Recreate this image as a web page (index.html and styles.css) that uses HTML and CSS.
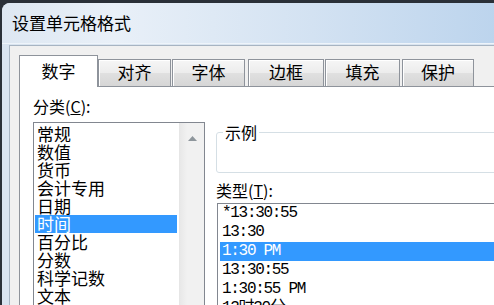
FILE: index.html
```html
<!DOCTYPE html>
<html lang="zh-CN">
<head>
<meta charset="utf-8">
<title>设置单元格格式</title>
<link rel="stylesheet" href="styles.css">
</head>
<body>
<div class="window">
  <div class="titlebar"><span class="title">设置单元格格式</span></div>
  <div class="frame">
    <div class="client">
      <div class="tabs">
        <div class="tab sel t1">数字</div>
        <div class="tab t2">对齐</div>
        <div class="tab t3">字体</div>
        <div class="tab t4">边框</div>
        <div class="tab t5">填充</div>
        <div class="tab t6">保护</div>
      </div>
      <div class="panel">
        <div class="left">
          <div class="label">分类(<u>C</u>):</div>
          <div class="listbox">
            <div class="items">
              <div class="item">常规</div>
              <div class="item">数值</div>
              <div class="item">货币</div>
              <div class="item">会计专用</div>
              <div class="item">日期</div>
              <div class="item active">时间</div>
              <div class="item">百分比</div>
              <div class="item">分数</div>
              <div class="item">科学记数</div>
              <div class="item">文本</div>
            </div>
            <div class="scrollbar">
              <svg class="arrow" width="9" height="5" viewBox="0 0 9 5"><path d="M0 5 L4.5 0 L9 5 Z" fill="#8e969c"/></svg>
            </div>
          </div>
        </div>
        <div class="right">
          <fieldset class="group">
            <legend>示例</legend>
          </fieldset>
          <div class="label type-label">类型(<u>T</u>):</div>
          <div class="typelist">
            <div class="titem">*13:30:55</div>
            <div class="titem">13:30</div>
            <div class="titem active">1:30 PM</div>
            <div class="titem">13:30:55</div>
            <div class="titem">1:30:55 PM</div>
            <div class="titem cjk">13时30分</div>
          </div>
        </div>
      </div>
    </div>
  </div>
</div>
</body>
</html>
```
FILE: styles.css
```css
html, body {
  margin: 0;
  padding: 0;
}
body {
  width: 494px;
  height: 305px;
  overflow: hidden;
  background: #2a3038;
  font-family: "Noto Sans CJK SC", "Liberation Sans", sans-serif;
  color: #000;
}
.window {
  margin: 3px 0 0 2px;
  width: 620px;
  height: 320px;
  background: #d9e4f0;
  border-top-left-radius: 8px;
  overflow: hidden;
}
.titlebar {
  height: 40px;
  display: flex;
  align-items: center;
  padding-left: 10px;
  background: linear-gradient(to right, #dde7f2 0%, #e9f0f8 18%, #d3e2f2 50%, #bcd4ed 80%, #b8d0eb 100%);
  border-bottom: 1px solid #eef4fa;
}
.title {
  font-size: 17px;
  line-height: 20px;
  color: #000;
}
.frame {
  padding: 1px 0 0 7px;
}
.client {
  background: #f0f0f0;
  border-top: 1px solid #a7b4c2;
  border-left: 1px solid #a7b4c2;
  padding: 9px 0 0 9px;
  height: 300px;
}
.tabs {
  display: flex;
  align-items: flex-end;
  height: 32px;
  margin-bottom: -1px;
  position: relative;
  z-index: 1;
}
.tab {
  box-sizing: border-box;
  height: 28px;
  border: 1px solid #8e939b;
  background: linear-gradient(#f6f6f6, #ececec 50%, #e0e0e0 51%, #d6d6d6);
  box-shadow: inset 1px 1px 0 #fff;
  font-size: 17px;
  line-height: 24px;
  text-align: center;
}
.tab.sel {
  height: 32px;
  background: #fff;
  border-bottom: none;
  box-shadow: none;
  line-height: 30px;
}
.t1 { width: 79px; }
.t2 { width: 73px; margin-left: 0; }
.t3 { width: 73px; margin-left: 1px; }
.t4 { width: 76px; margin-left: 3px; }
.t5 { width: 75px; margin-left: 1px; }
.t6 { width: 72px; margin-left: 2px; }
.panel {
  display: flex;
  align-items: flex-start;
  background: #fff;
  border-top: 1px solid #8e939b;
  border-left: 1px solid #8e939b;
  padding: 10px 0 0 13px;
  height: 300px;
}
.left {
  width: 172px;
  flex: none;
}
.label {
  font-size: 16px;
  line-height: 18px;
}
.listbox {
  box-sizing: border-box;
  width: 172px;
  height: 240px;
  margin-top: 7px;
  border: 1px solid #828790;
  display: flex;
}
.items {
  flex: 1;
  padding: 2px 2px 0 1px;
}
.item {
  font-size: 17px;
  line-height: 18px;
  height: 18px;
  padding-left: 2px;
  white-space: nowrap;
}
.item.active, .titem.active {
  background: #3399ff;
  color: #fff;
}
.scrollbar {
  width: 24px;
  flex: none;
  background: linear-gradient(to right, #e8e8e8, #f1f1f1 30%, #f1f1f1);
  border-left: 1px solid #e6e6e6;
  display: flex;
  justify-content: center;
  align-items: flex-start;
  padding-top: 13px;
}
.arrow {
  display: block;
}
.right {
  margin-left: 11px;
  width: 330px;
  flex: none;
}
.group {
  box-sizing: border-box;
  margin: 26px 0 0 0;
  padding: 0 0 0 6px;
  height: 50px;
  border: 1px solid #d5dfe5;
  border-radius: 3px;
}
.group legend {
  padding: 0 2px;
  font-size: 16px;
  line-height: 18px;
}
.type-label {
  margin-top: 8px;
}
.typelist {
  margin: 4px 0 0 1px;
  border: 1px solid #828790;
  height: 200px;
  padding: 0 0 0 2px;
}
.titem {
  font-family: "Liberation Mono", monospace;
  font-size: 16px;
  letter-spacing: -1.3px;
  line-height: 19px;
  height: 19px;
  padding-left: 2px;
  white-space: nowrap;
}
.titem.cjk {
  font-family: "Liberation Mono", "Noto Sans CJK SC", monospace;
}
```
